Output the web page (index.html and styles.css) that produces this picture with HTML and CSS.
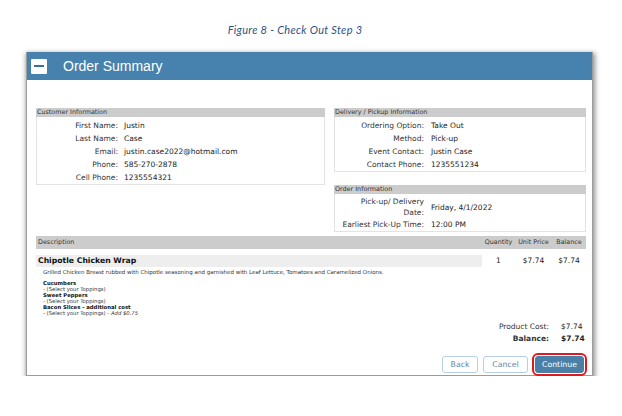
FILE: index.html
```html
<!doctype html>
<html>
	<head>
		<meta http-equiv="Content-Type" content="text/html;charset=UTF-8"/>
		<title>Order Summary</title>
		<link rel="stylesheet" href="styles.css">
	</head>
<body>
	<p class="caption">Figure 8 - Check Out Step 3</p>
	<div class="panel">
		<div class="panel-head">
			<span class="toggle"></span>
			<h1>Order Summary</h1>
		</div>
		<div class="panel-body">
			<div class="info">
				<div class="box box-customer">
					<h2>Customer Information</h2>
					<div class="fields">
						<span class="label">First Name:</span><span>Justin</span>
						<span class="label">Last Name:</span><span>Case</span>
						<span class="label">Email:</span><span>justin.case2022@hotmail.com</span>
						<span class="label">Phone:</span><span>585-270-2878</span>
						<span class="label">Cell Phone:</span><span>1235554321</span>
					</div>
				</div>
				<div class="col-right">
					<div class="box box-delivery">
						<h2>Delivery / Pickup Information</h2>
						<div class="fields">
							<span class="label">Ordering Option:</span><span>Take Out</span>
							<span class="label">Method:</span><span>Pick-up</span>
							<span class="label">Event Contact:</span><span>Justin Case</span>
							<span class="label">Contact Phone:</span><span>1235551234</span>
						</div>
					</div>
					<div class="box box-order">
						<h2>Order Information</h2>
						<div class="fields">
							<span class="label two">Pick-up/ Delivery<br>Date:</span><span>Friday, 4/1/2022</span>
							<span class="label">Earliest Pick-Up Time:</span><span>12:00 PM</span>
						</div>
					</div>
				</div>
			</div>

			<div class="lines-head">
				<span class="desc">Description</span>
				<span>Quantity</span>
				<span>Unit Price</span>
				<span>Balance</span>
			</div>
			<div class="line">
				<div class="item">
					<div class="item-name">Chipotle Chicken Wrap</div>
					<p class="item-desc">Grilled Chicken Breast rubbed with Chipotle seasoning and garnished with Leaf Lettuce, Tomatoes and Caramelized Onions.</p>
					<div class="toppings">
						<b>Cucumbers</b>
						<span>- (Select your Toppings)</span>
						<b>Sweet Peppers</b>
						<span>- (Select your Toppings)</span>
						<b>Bacon Slices - additional cost</b>
						<span>- (Select your Toppings) - <i>Add $0.75</i></span>
					</div>
				</div>
				<span class="num">1</span>
				<span class="num">$7.74</span>
				<span class="num">$7.74</span>
			</div>

			<div class="totals">
				<span class="label">Product Cost:</span><span>$7.74</span>
				<b class="label">Balance:</b><b>$7.74</b>
			</div>

			<div class="actions">
				<a href="javascript:;" class="btn btn-back">Back</a>
				<a href="javascript:;" class="btn btn-cancel">Cancel</a>
				<a href="javascript:;" class="btn btn-continue">Continue</a>
			</div>
		</div>
	</div>
</body>
</html>
```

FILE: styles.css
```css
*{margin:0;padding:0;text-decoration:none;box-sizing:border-box;}
body{background:#fff;font-family:"DejaVu Sans",Verdana,sans-serif;color:#222;}

.caption{height:52px;padding-top:23px;padding-right:32px;line-height:14px;text-align:center;font-family:Lato,"Open Sans",sans-serif;font-style:italic;font-size:11px;letter-spacing:0.3px;color:#2f5188;}

.panel{margin-left:26px;width:567px;border:1px solid #9c9c9c;border-top:0;background:#fff;box-shadow:1px 2px 5px 1px rgba(0,0,0,.45);}
.panel-head{height:28px;background:#4682ad;display:flex;align-items:center;padding-left:4px;}
.toggle{width:16px;height:15px;background:#fff;border-radius:1px;position:relative;margin-right:16px;}
.toggle:after{content:"";position:absolute;left:3px;right:3px;top:6px;height:2px;background:#3d6f96;}
.panel-head h1{font-family:"Liberation Sans",Arial,sans-serif;font-weight:normal;font-size:14px;color:#fff;}

.panel-body{padding:28px 6px 2px 9px;}

.info{display:flex;gap:9px;margin-bottom:4px;align-items:flex-start;}
.box-customer{width:289px;}
.col-right{flex:1;}
.box-delivery{margin-bottom:13px;}
.box h2{height:9px;line-height:9px;background:#cccccc;font-size:6.4px;font-weight:normal;color:#333;padding-left:1px;}
.fields{display:grid;border:1px solid #e3e3e3;border-top:0;padding-top:2px;font-size:7.5px;line-height:13px;color:#222;}
.fields .label{text-align:right;white-space:nowrap;color:#333;}
.fields .two{line-height:11px;}
.fields span:not(.label){align-self:center;}
.box-customer .fields{grid-template-columns:81px 1fr;column-gap:6px;}
.box-delivery .fields,.box-order .fields{grid-template-columns:89px 1fr;column-gap:7px;}

.lines-head,.line{display:grid;grid-template-columns:1fr 33px 37px 34px;}
.lines-head{height:13px;line-height:13px;background:#cccccc;font-size:6.4px;color:#333;text-align:center;}
.lines-head .desc{text-align:left;padding-left:2px;}
.line{margin-top:6px;}
.item-name{height:12px;line-height:12px;background:#eeeeee;font-weight:bold;font-size:7.7px;padding-left:2px;color:#111;}
.num{text-align:center;font-size:7.5px;line-height:12px;}
.item-desc{margin-top:2px;padding-left:7px;font-size:5.5px;line-height:7px;color:#333;}
.toppings{margin-top:4px;padding-left:7px;font-size:5.3px;line-height:6px;display:flex;flex-direction:column;align-items:flex-start;color:#333;}
.toppings b{color:#111;}

.totals{display:grid;grid-template-columns:1fr 25px;margin-top:5px;font-size:7.5px;line-height:12px;}
.totals .label{text-align:right;padding-right:12px;color:#333;}

.actions{display:flex;justify-content:flex-end;gap:5px;margin-top:11px;padding-right:2px;}
.btn{display:block;height:17px;line-height:15px;border:1px solid #b7cfe2;border-radius:3px;background:#fff;color:#5d84a8;font-size:7.8px;text-align:center;}
.btn-back{width:36px;}
.btn-cancel{width:45px;}
.btn-continue{width:49px;margin-left:2px;background:#4a7fa8;border-color:#4a7fa8;color:#fff;outline:2px solid #e0191f;outline-offset:1px;}
```
